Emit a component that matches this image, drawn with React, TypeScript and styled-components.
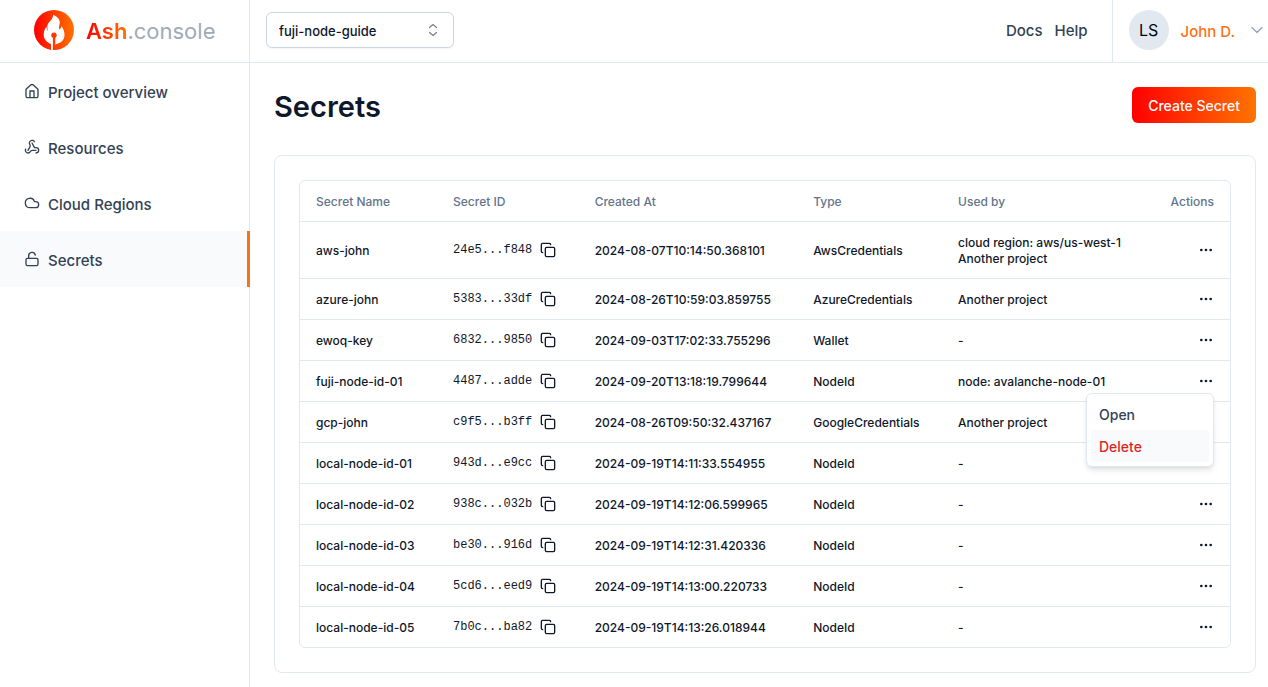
import React, { useState } from "react";
import styled, { createGlobalStyle, css } from "styled-components";
import { ChevronDown, Cloud, Copy, Ellipsis, LockOpen, Webhook } from "lucide-react";

const GlobalStyle = createGlobalStyle`
  *, *::before, *::after { box-sizing: border-box; }
  body {
    margin: 0;
    background: #fff;
    color: #0f172a;
    font-family: Inter, "Liberation Sans", sans-serif;
  }
  button, select { font-family: inherit; }
`;

const Page = styled.div`
  display: flex;
  flex-direction: column;
  min-height: 100vh;
`;

const Header = styled.header`
  display: flex;
  height: 63px;
  border-bottom: 1px solid #e2e8f0;
`;

const Brand = styled.a`
  display: flex;
  align-items: center;
  gap: 12px;
  width: 250px;
  padding: 0 0 2px 34px;
  border-right: 1px solid #e2e8f0;
  text-decoration: none;
  font-size: 22px;
  line-height: 32px;
  color: #a0aabb;

  span { padding-top: 2px; }
`;

const BrandName = styled.strong`
  font-weight: 600;
  background: linear-gradient(90deg, #ff0000, #ff7300);
  background-clip: text;
  color: transparent;
`;

const HeaderBar = styled.div`
  display: flex;
  flex: 1;
  align-items: center;
  padding: 0 24px 2px 16px;
`;

const ProjectPicker = styled.label`
  position: relative;
  display: block;
  width: 188px;

  svg {
    position: absolute;
    top: 10px;
    right: 13px;
    pointer-events: none;
  }
`;

const ProjectSelect = styled.select`
  appearance: none;
  width: 100%;
  height: 36px;
  padding: 2px 12px 0;
  border: 1px solid #cbd5e1;
  border-radius: 6px;
  background: #fff;
  box-shadow: 0 1px 2px rgba(0, 0, 0, 0.05);
  color: #0f172a;
  font-size: 13px;
  font-weight: 500;
`;

const HeaderLinks = styled.nav`
  display: flex;
  gap: 12px;
  margin-left: auto;
  padding-top: 2px;

  a {
    color: #334155;
    font-size: 15px;
    line-height: 24px;
    font-weight: 500;
    text-decoration: none;
  }
`;

const Account = styled.button`
  display: flex;
  align-items: center;
  gap: 12px;
  padding: 0 1px 2px 16px;
  border: 0;
  border-left: 1px solid #e2e8f0;
  background: none;
  color: #f97316;
  font-size: 15px;
  font-weight: 500;
`;

const AccountName = styled.span`
  padding-top: 2px;
`;

const Avatar = styled.span`
  display: grid;
  place-items: center;
  width: 40px;
  height: 40px;
  border-radius: 50%;
  background: #e2e8f0;
  color: #020617;
  font-size: 16px;
  font-weight: 400;
`;

const Body = styled.div`
  display: flex;
  flex: 1;
`;

const Sidebar = styled.nav`
  width: 250px;
  flex-shrink: 0;
  border-right: 1px solid #e2e8f0;
`;

const SidebarLink = styled.a<{ $active?: boolean }>`
  display: flex;
  align-items: center;
  gap: 8px;
  height: 56px;
  padding: 4px 24px 0;
  color: #334155;
  font-size: 15px;
  line-height: 24px;
  font-weight: 500;
  text-decoration: none;

  svg { margin-bottom: 4px; }

  ${({ $active }) =>
    $active &&
    css`
      margin-right: -1px;
      border-right: 3px solid #f97316;
      background: #f8fafc;
    `}
`;

const Main = styled.main`
  flex: 1;
  min-width: 0;
  padding: 24px 12px 12px 24px;
`;

const TitleBar = styled.div`
  display: flex;
  justify-content: space-between;
  align-items: flex-start;
  margin-bottom: 28px;
`;

const Title = styled.h1`
  margin: 0;
  font-size: 29px;
  line-height: 40px;
  font-weight: 600;
`;

const PrimaryButton = styled.button`
  height: 36px;
  padding: 0 16px;
  border: 0;
  border-radius: 6px;
  background: linear-gradient(90deg, #ff0000, #ff7300);
  color: #f8fafc;
  font-size: 14px;
  font-weight: 500;
`;

const Card = styled.section`
  padding: 24px;
  border: 1px solid #e2e8f0;
  border-radius: 8px;
`;

const TableFrame = styled.div`
  border: 1px solid #e2e8f0;
  border-radius: 6px;
`;

const Table = styled.table`
  width: 100%;
  border-collapse: collapse;
  font-size: 12px;
  line-height: 16px;
  font-weight: 500;
  white-space: nowrap;

  th, td {
    padding: 13px 16px 11px;
    text-align: left;
  }
  th {
    color: #64748b;
    font-weight: 500;
  }
  thead tr, tbody tr:not(:last-child) {
    border-bottom: 1px solid #e2e8f0;
  }
  th:last-child { text-align: right; }
`;

const SecretId = styled.div`
  display: flex;
  align-items: center;
  gap: 8px;
  height: 16px;

  code {
    padding-bottom: 2px;
    font-family: "Liberation Mono", monospace;
    font-size: 12px;
    font-weight: 400;
  }
`;

const IconButton = styled.button`
  display: block;
  margin: -1px 0 1px;
  padding: 0;
  border: 0;
  background: none;
  color: inherit;

  svg { display: block; }
`;

const ActionCell = styled.div`
  position: relative;
  display: flex;
  justify-content: flex-end;
  min-width: 48px;
`;

const Menu = styled.div`
  position: absolute;
  top: 19px;
  right: 0;
  z-index: 1;
  width: 128px;
  padding: 4px;
  border: 1px solid #e2e8f0;
  border-radius: 6px;
  background: #fff;
  box-shadow: 0 4px 6px -1px rgba(0, 0, 0, 0.1), 0 2px 4px -2px rgba(0, 0, 0, 0.1);
`;

const MenuItem = styled.button<{ $danger?: boolean }>`
  display: block;
  width: 100%;
  height: 32px;
  padding: 0 8px;
  border: 0;
  border-radius: 2px;
  background: ${({ $danger }) => ($danger ? "#f8fafc" : "none")};
  color: ${({ $danger }) => ($danger ? "#dc2626" : "#334155")};
  font-size: 14px;
  font-weight: 500;
  text-align: left;
`;

const Logo = () => (
  <svg width="40" height="40" viewBox="0 0 40 40" aria-hidden="true">
    <defs>
      <linearGradient id="flame" gradientUnits="userSpaceOnUse" x1="0" y1="0" x2="40" y2="0">
        <stop offset="0" stopColor="#ff0000" />
        <stop offset="1" stopColor="#ff7300" />
      </linearGradient>
    </defs>
    <circle cx="20" cy="20" r="20" fill="url(#flame)" />
    <path
      fill="#fff"
      d="M19.300 4.700C23 6.500 25.800 9 25.800 12.500C25.800 15 24.500 16.500 25.200 19.500C26.500 19 27.300 18 27.300 16C29.500 18.500 30.700 22 30.500 25.500C30.300 30 27 33 21.500 34.500L18.900 40L17 39.500V34C12 32 9.700 28.500 9.700 24.500C9.700 21.500 10.800 18.500 12.700 16.700C12.700 18.500 13 20 14.200 21C13 17.500 12.800 15.500 14.500 13C16.500 10.500 19 8.500 19.300 4.700Z"
    />
    <circle cx="20" cy="25.300" r="2.700" fill="url(#flame)" />
    <path fill="url(#flame)" d="M18.900 26.500H21.300V40H18.900Z" />
  </svg>
);

const HomeIcon = () => (
  <svg width="16" height="16" viewBox="0 0 24 24" fill="none" stroke="currentColor" strokeWidth="2" strokeLinejoin="round" aria-hidden="true">
    <path d="M3 9.500L10 3Q12 1.400 14 3L21 9.500V20Q21 22 19 22H5Q3 22 3 20Z" />
    <path d="M9 22V12H15V22" />
  </svg>
);

const SortIcon = () => (
  <svg width="16" height="16" viewBox="0 0 16 16" fill="none" stroke="#7b818c" strokeWidth="1.200" strokeLinecap="round" strokeLinejoin="round" aria-hidden="true">
    <path d="M4.500 5.500L8 2.500L11.500 5.500M4.500 10.500L8 13.500L11.500 10.500" />
  </svg>
);

const secrets = [
  { name: "aws-john", id: "24e5...f848", created: "2024-08-07T10:14:50.368101", type: "AwsCredentials", usedBy: ["cloud region: aws/us-west-1", "Another project"] },
  { name: "azure-john", id: "5383...33df", created: "2024-08-26T10:59:03.859755", type: "AzureCredentials", usedBy: ["Another project"] },
  { name: "ewoq-key", id: "6832...9850", created: "2024-09-03T17:02:33.755296", type: "Wallet", usedBy: ["-"] },
  { name: "fuji-node-id-01", id: "4487...adde", created: "2024-09-20T13:18:19.799644", type: "NodeId", usedBy: ["node: avalanche-node-01"] },
  { name: "gcp-john", id: "c9f5...b3ff", created: "2024-08-26T09:50:32.437167", type: "GoogleCredentials", usedBy: ["Another project"] },
  { name: "local-node-id-01", id: "943d...e9cc", created: "2024-09-19T14:11:33.554955", type: "NodeId", usedBy: ["-"] },
  { name: "local-node-id-02", id: "938c...032b", created: "2024-09-19T14:12:06.599965", type: "NodeId", usedBy: ["-"] },
  { name: "local-node-id-03", id: "be30...916d", created: "2024-09-19T14:12:31.420336", type: "NodeId", usedBy: ["-"] },
  { name: "local-node-id-04", id: "5cd6...eed9", created: "2024-09-19T14:13:00.220733", type: "NodeId", usedBy: ["-"] },
  { name: "local-node-id-05", id: "7b0c...ba82", created: "2024-09-19T14:13:26.018944", type: "NodeId", usedBy: ["-"] },
];

export default function App() {
  const [openMenu, setOpenMenu] = useState<string | null>("fuji-node-id-01");

  return (
    <Page>
      <GlobalStyle />
      <Header>
        <Brand href="#">
          <Logo />
          <span><BrandName>Ash</BrandName>.console</span>
        </Brand>
        <HeaderBar>
          <ProjectPicker>
            <ProjectSelect aria-label="Project" defaultValue="fuji-node-guide">
              <option>fuji-node-guide</option>
            </ProjectSelect>
            <SortIcon />
          </ProjectPicker>
          <HeaderLinks>
            <a href="#docs">Docs</a>
            <a href="#help">Help</a>
          </HeaderLinks>
        </HeaderBar>
        <Account type="button">
          <Avatar>LS</Avatar>
          <AccountName>John D.</AccountName>
          <ChevronDown size={20} strokeWidth={1.5} color="#94a3b8" />
        </Account>
      </Header>
      <Body>
        <Sidebar>
          <SidebarLink href="#overview"><HomeIcon />Project overview</SidebarLink>
          <SidebarLink href="#resources"><Webhook size={16} />Resources</SidebarLink>
          <SidebarLink href="#regions"><Cloud size={16} />Cloud Regions</SidebarLink>
          <SidebarLink href="#secrets" $active><LockOpen size={16} />Secrets</SidebarLink>
        </Sidebar>
        <Main>
          <TitleBar>
            <Title>Secrets</Title>
            <PrimaryButton type="button">Create Secret</PrimaryButton>
          </TitleBar>
          <Card>
            <TableFrame>
              <Table>
                <thead>
                  <tr>
                    <th>Secret Name</th>
                    <th>Secret ID</th>
                    <th>Created At</th>
                    <th>Type</th>
                    <th>Used by</th>
                    <th>Actions</th>
                  </tr>
                </thead>
                <tbody>
                  {secrets.map((s) => (
                    <tr key={s.name}>
                      <td>{s.name}</td>
                      <td>
                        <SecretId>
                          <code>{s.id}</code>
                          <IconButton type="button" aria-label="Copy ID"><Copy size={16} /></IconButton>
                        </SecretId>
                      </td>
                      <td>{s.created}</td>
                      <td>{s.type}</td>
                      <td>{s.usedBy.map((u) => <div key={u}>{u}</div>)}</td>
                      <td>
                        <ActionCell>
                          <IconButton
                            type="button"
                            aria-label="Actions"
                            onClick={() => setOpenMenu(openMenu === s.name ? null : s.name)}
                          >
                            <Ellipsis size={16} />
                          </IconButton>
                          {openMenu === s.name && (
                            <Menu role="menu">
                              <MenuItem type="button" role="menuitem">Open</MenuItem>
                              <MenuItem type="button" role="menuitem" $danger>Delete</MenuItem>
                            </Menu>
                          )}
                        </ActionCell>
                      </td>
                    </tr>
                  ))}
                </tbody>
              </Table>
            </TableFrame>
          </Card>
        </Main>
      </Body>
    </Page>
  );
}
